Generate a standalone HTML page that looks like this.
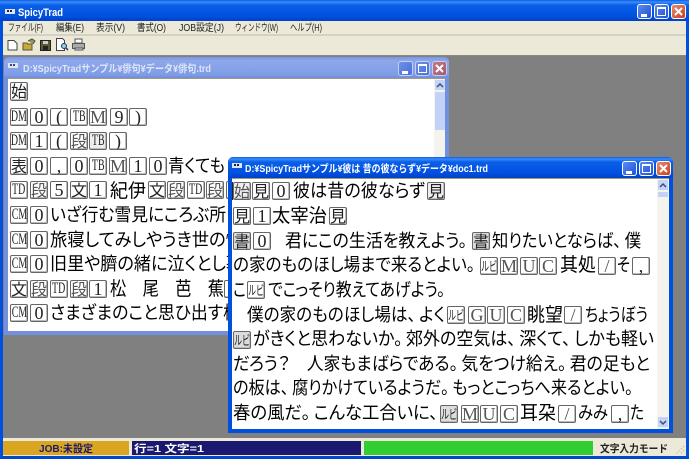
<!DOCTYPE html>
<html><head><meta charset="utf-8"><style>
html,body{margin:0;padding:0}
body{width:689px;height:459px;position:relative;overflow:hidden;background:#808080;font-family:"Liberation Sans","Noto Sans CJK JP",sans-serif}
div,svg{position:absolute}
b{position:absolute;box-sizing:border-box;width:18px;height:18px;border:1px solid #666;border-radius:2px;background:#fff;box-shadow:inset -1px -1px 0 #bbb;font:400 18px/16px "Liberation Serif","Noto Sans CJK JP",serif;text-align:center;color:#222;overflow:hidden;white-space:nowrap}
b i{display:inline-block;font-style:normal;transform:scaleX(.62);margin:0 -8px}
b.g{background:#ddd;color:#222}
b.l{color:#555}
b.n{font-size:16px}
b.k{font-family:"Noto Sans CJK JP",sans-serif;font-size:16px;line-height:15px}
b.r{font:400 13px/15px "Noto Sans CJK JP",sans-serif}
text{font-family:"Liberation Sans","Noto Sans CJK JP",sans-serif;fill:#000;font-size:18px;font-feature-settings:"palt"}
text.j{font-size:19px}
text.t{font-size:10.500px;font-weight:700;fill:#fff;font-feature-settings:normal}
text.m{font-size:10px;fill:#222;font-feature-settings:normal}
.btn{width:15px;height:15px;box-sizing:border-box;border:1px solid #fff;border-radius:3px;background:linear-gradient(135deg,#5c8bf0,#1f50d8)}
.btn.c{background:linear-gradient(135deg,#ec8a6e,#c4421c)}
.in .btn{background:linear-gradient(135deg,#6f90e8,#4a6fd8);border-color:#c3d0f2}
.in .btn.c{background:linear-gradient(135deg,#c07c88,#a85668);border-color:#c3d0f2}
.btn i{position:absolute;display:block;box-sizing:border-box;transform:none;margin:0}
</style></head><body>

<!-- main frame -->
<div style="left:0;top:0;width:689px;height:21px;background:linear-gradient(#0a5ae6 0,#3a8cf8 2px,#0a5fe8 5px,#0050e0 16px,#0040c8 21px)"></div>
<div style="left:0;top:21px;width:3px;height:438px;background:#0050e0"></div>
<div style="left:686px;top:21px;width:3px;height:438px;background:#0050e0"></div>
<div style="left:0;top:456px;width:689px;height:3px;background:#0048d0"></div>
<div style="left:3px;top:21px;width:683px;height:35px;background:#ece9d8"></div>
<div style="left:3px;top:34px;width:683px;height:2px;background:#d4d2c6"></div>
<div style="left:3px;top:55px;width:683px;height:1px;background:#8a887e"></div>

<svg style="left:0;top:0" width="689" height="56">
<rect x="5" y="9" width="10" height="5" fill="#dfe6f6"/><rect x="7" y="10" width="2" height="2" fill="#224"/><rect x="10" y="10" width="2" height="2" fill="#224"/>
<text x="18" y="16" textLength="45" lengthAdjust="spacingAndGlyphs" class="t" style="font-size:11px">SpicyTrad</text>
<text x="8" y="31" textLength="35" lengthAdjust="spacingAndGlyphs" class="m">ファイル(F)</text>
<text x="56" y="31" textLength="28" lengthAdjust="spacingAndGlyphs" class="m">編集(E)</text>
<text x="96" y="31" textLength="29" lengthAdjust="spacingAndGlyphs" class="m">表示(V)</text>
<text x="137" y="31" textLength="29" lengthAdjust="spacingAndGlyphs" class="m">書式(O)</text>
<text x="179" y="31" textLength="45" lengthAdjust="spacingAndGlyphs" class="m">JOB設定(J)</text>
<text x="235" y="31" textLength="43" lengthAdjust="spacingAndGlyphs" class="m">ウィンドウ(W)</text>
<text x="290" y="31" textLength="32" lengthAdjust="spacingAndGlyphs" class="m">ヘルプ(H)</text>
<!-- toolbar -->
<path d="M8 40.500h6l3 3v6.500H8z" fill="#fff" stroke="#444"/>
<path d="M23 50v-7h4l1 1h4v6z" fill="#c9a83a" stroke="#554"/><path d="M28 41l4-2 3 2-2 3" fill="#8ba04a" stroke="#554"/>
<rect x="40.500" y="40.500" width="10" height="10" fill="#5a5a30" stroke="#222"/><rect x="43" y="41" width="5" height="3" fill="#ccc"/><rect x="43" y="46" width="5" height="4" fill="#222"/>
<path d="M56.500 38.500h6l2 2v10h-8z" fill="#fff" stroke="#444"/><circle cx="64" cy="46" r="2.500" fill="#8fd0e0" stroke="#236"/><path d="M66 48l2 2" stroke="#236" stroke-width="1.500"/>
<path d="M75 39h7v4h-7z" fill="#fff" stroke="#555"/><path d="M72.500 43.500h12v5h-12z" fill="#aaa" stroke="#555"/><path d="M75 48h8v2h-8z" fill="#ddd" stroke="#555"/>
</svg>
<div class="btn" style="left:637px;top:4px"><i style="left:3px;top:9px;width:6px;height:3px;background:#fff"></i></div>
<div class="btn" style="left:654px;top:4px"><i style="left:2px;top:2px;width:9px;height:9px;border:1px solid #fff;border-top-width:2px"></i></div>
<div class="btn c" style="left:671px;top:4px"><svg width="13" height="13"><path d="M3 3l7 7M10 3l-7 7" stroke="#fff" stroke-width="2"/></svg></div>

<!-- window 1 -->
<div class="in" style="left:4px;top:57px;width:445px;height:278px;background:#7390e0;border-radius:5px 5px 0 0">
  <div style="left:0;top:0;width:445px;height:21px;border-radius:5px 5px 0 0;background:linear-gradient(#7a96e4,#8ea8ea 4px,#7f9ce6 18px,#6f8cdc)"></div>
  <div class="btn" style="left:394px;top:4px"><i style="left:3px;top:9px;width:6px;height:3px;background:#fff"></i></div>
  <div class="btn" style="left:411px;top:4px"><i style="left:2px;top:2px;width:9px;height:9px;border:1px solid #fff;border-top-width:2px"></i></div>
  <div class="btn c" style="left:428px;top:4px"><svg width="13" height="13"><path d="M3 3l7 7M10 3l-7 7" stroke="#fff" stroke-width="2"/></svg></div>
</div>
<div style="left:8px;top:78px;width:437px;height:253px;background:#fff"></div>
<div style="left:8px;top:78px;width:437px;height:1px;background:#a09a80"></div>
<div style="left:434px;top:79px;width:11px;height:252px;background:#f4f3ee"></div>
<div style="left:435px;top:80px;width:10px;height:10px;background:#c5d4f6"></div>
<div style="left:435px;top:92px;width:10px;height:38px;background:#c3d3f8"></div>
<svg style="left:0;top:0" width="689" height="459">
<path d="M437 87l3-3 3 3" fill="none" stroke="#3a4d80" stroke-width="1.500"/>
<rect x="8" y="63" width="10" height="5" fill="#dfe6f6"/><rect x="10" y="64" width="2" height="2" fill="#446"/><rect x="13" y="64" width="2" height="2" fill="#446"/>
<text x="23" y="72" textLength="188" lengthAdjust="spacingAndGlyphs" class="t" style="fill:#dfe6f8">D:¥SpicyTradサンプル¥俳句¥データ¥俳句.trd</text>
<text x="168" y="172" textLength="57" lengthAdjust="spacingAndGlyphs">青くても</text>
<text x="110" y="197" textLength="36" lengthAdjust="spacingAndGlyphs" class="j">紀伊</text>
<text x="50" y="221" textLength="176" lengthAdjust="spacingAndGlyphs">いざ行む雪見にころぶ所</text>
<text x="50" y="246" textLength="193" lengthAdjust="spacingAndGlyphs">旅寝してみしやうき世の情</text>
<text x="50" y="270" textLength="193" lengthAdjust="spacingAndGlyphs">旧里や臍の緒に泣くとし暮</text>
<text x="110" y="295" textLength="114" lengthAdjust="spacingAndGlyphs" class="j">松　尾　芭　蕉</text>
<text x="50" y="319" textLength="190" lengthAdjust="spacingAndGlyphs">さまざまのこと思ひ出す桜</text>
</svg>
<div>
<b class="k" style="left:10px;top:82px;height:19px">始</b>
<b class="n" style="left:10px;top:108px"><i>DM</i></b><b style="left:30px;top:108px">0</b><b style="left:50px;top:108px">(</b><b class="n" style="left:70px;top:108px"><i>TB</i></b><b class="l" style="left:89px;top:108px">M</b><b style="left:110px;top:108px">9</b><b style="left:129px;top:108px">)</b>
<b class="n" style="left:10px;top:132px"><i>DM</i></b><b style="left:30px;top:132px">1</b><b style="left:50px;top:132px">(</b><b class="k l" style="left:70px;top:132px">段</b><b class="n" style="left:89px;top:132px;background:#eee"><i>TB</i></b><b style="left:109px;top:132px">)</b>
<b class="k" style="left:10px;top:157px">表</b><b style="left:30px;top:157px">0</b><b style="left:50px;top:157px">,</b><b style="left:70px;top:157px">0</b><b class="n" style="left:89px;top:157px"><i>TB</i></b><b class="l" style="left:109px;top:157px">M</b><b style="left:129px;top:157px">1</b><b style="left:149px;top:157px">0</b>
<b class="n" style="left:10px;top:181px"><i>TD</i></b><b class="k l" style="left:30px;top:181px">段</b><b style="left:50px;top:181px">5</b><b class="k" style="left:70px;top:181px">文</b><b style="left:89px;top:181px">1</b><b class="k" style="left:148px;top:181px">文</b><b class="k l" style="left:167px;top:181px">段</b><b class="n" style="left:187px;top:181px"><i>TD</i></b><b class="k l" style="left:206px;top:181px">段</b><b style="left:226px;top:181px"></b>
<b class="n" style="left:10px;top:206px"><i>CM</i></b><b style="left:30px;top:206px">0</b>
<b class="n" style="left:10px;top:231px"><i>CM</i></b><b style="left:30px;top:231px">0</b>
<b class="n" style="left:10px;top:255px"><i>CM</i></b><b style="left:30px;top:255px">0</b>
<b class="k" style="left:10px;top:280px">文</b><b class="k l" style="left:30px;top:280px">段</b><b class="n" style="left:50px;top:280px"><i>TD</i></b><b class="k l" style="left:70px;top:280px">段</b><b style="left:89px;top:280px">1</b><b style="left:224px;top:280px"></b>
<b class="n" style="left:10px;top:304px"><i>CM</i></b><b style="left:30px;top:304px">0</b>
</div>

<!-- window 2 -->
<div style="left:228px;top:157px;width:445px;height:276px;background:#0050e0;border-radius:5px 5px 0 0">
  <div style="left:0;top:0;width:445px;height:21px;border-radius:5px 5px 0 0;background:linear-gradient(#0a5ae6 0,#3a8cf8 2px,#0a5fe8 5px,#0050e0 16px,#0040c8 21px)"></div>
  <div class="btn" style="left:394px;top:4px"><i style="left:3px;top:9px;width:6px;height:3px;background:#fff"></i></div>
  <div class="btn" style="left:411px;top:4px"><i style="left:2px;top:2px;width:9px;height:9px;border:1px solid #fff;border-top-width:2px"></i></div>
  <div class="btn c" style="left:428px;top:4px"><svg width="13" height="13"><path d="M3 3l7 7M10 3l-7 7" stroke="#fff" stroke-width="2"/></svg></div>
</div>
<div style="left:232px;top:178px;width:437px;height:251px;background:#fff"></div>
<div style="left:232px;top:178px;width:437px;height:1px;background:#a09a80"></div>
<div style="left:657px;top:179px;width:12px;height:250px;background:#f4f3ee"></div>
<div style="left:658px;top:180px;width:10px;height:10px;background:#c5d4f6"></div>
<div style="left:658px;top:192px;width:10px;height:5px;background:#c3d3f8"></div>
<div style="left:658px;top:417px;width:10px;height:10px;background:#c5d4f6"></div>
<svg style="left:0;top:0" width="689" height="459">
<path d="M660 187l3-3 3 3" fill="none" stroke="#3a4d80" stroke-width="1.500"/>
<path d="M660 421l3 3 3-3" fill="none" stroke="#3a4d80" stroke-width="1.500"/>
<rect x="232" y="163" width="10" height="5" fill="#dfe6f6"/><rect x="234" y="164" width="2" height="2" fill="#224"/><rect x="237" y="164" width="2" height="2" fill="#224"/>
<text x="245" y="172" textLength="243" lengthAdjust="spacingAndGlyphs" class="t">D:¥SpicyTradサンプル¥彼は 昔の彼ならず¥データ¥doc1.trd</text>
<text x="293" y="197" textLength="132" lengthAdjust="spacingAndGlyphs">彼は昔の彼ならず</text>
<text x="272" y="222" textLength="55" lengthAdjust="spacingAndGlyphs" class="j">太宰治</text>
<text x="285" y="247" textLength="182" lengthAdjust="spacingAndGlyphs">君にこの生活を教えよう。</text>
<text x="492" y="247" textLength="149" lengthAdjust="spacingAndGlyphs">知りたいとならば、&#8201;僕</text>
<text x="233" y="271" textLength="242" lengthAdjust="spacingAndGlyphs">の家のものほし場まで来るとよい。</text>
<text x="560" y="271" textLength="36" lengthAdjust="spacingAndGlyphs" class="j">其処</text>
<text x="617" y="271" textLength="13" lengthAdjust="spacingAndGlyphs">そ</text>
<text x="233" y="296" textLength="13" lengthAdjust="spacingAndGlyphs">こ</text>
<text x="268" y="296" textLength="177" lengthAdjust="spacingAndGlyphs">でこっそり教えてあげよう。</text>
<text x="247" y="321" textLength="198" lengthAdjust="spacingAndGlyphs">僕の家のものほし場は、&#8201;よく</text>
<text x="527" y="321" textLength="36" lengthAdjust="spacingAndGlyphs" class="j">眺望</text>
<text x="585" y="321" textLength="63" lengthAdjust="spacingAndGlyphs">ちょうぼう</text>
<text x="253" y="345" textLength="401" lengthAdjust="spacingAndGlyphs">がきくと思わないか。&#8201;郊外の空気は、&#8201;深くて、&#8201;しかも軽い</text>
<text x="233" y="370" textLength="417" lengthAdjust="spacingAndGlyphs">だろう？　人家もまばらである。&#8201;気をつけ給え。&#8201;君の足もと</text>
<text x="233" y="394" textLength="400" lengthAdjust="spacingAndGlyphs">の板は、&#8201;腐りかけているようだ。&#8201;もっとこっちへ来るとよい。</text>
<text x="233" y="419" textLength="205" lengthAdjust="spacingAndGlyphs">春の風だ。&#8201;こんな工合いに、</text>
<text x="520" y="419" textLength="36" lengthAdjust="spacingAndGlyphs" class="j">耳朶</text>
<text x="578" y="419" textLength="30" lengthAdjust="spacingAndGlyphs">みみ</text>
<text x="630" y="419" textLength="14" lengthAdjust="spacingAndGlyphs">た</text>
</svg>
<div>
<b class="k l" style="left:233px;top:182px;background:#eee">始</b><b class="k" style="left:252px;top:182px">見</b><b style="left:272px;top:182px">0</b><b class="k" style="left:427px;top:182px;background:#eee">見</b>
<b class="k" style="left:233px;top:207px">見</b><b style="left:253px;top:207px">1</b><b class="k" style="left:329px;top:207px">見</b>
<b class="k g" style="left:233px;top:232px">書</b><b style="left:253px;top:232px">0</b><b class="k g" style="left:472px;top:232px">書</b>
<b class="r" style="left:480px;top:257px"><i>ルビ</i></b><b class="l" style="left:500px;top:257px">M</b><b class="l" style="left:520px;top:257px">U</b><b class="l" style="left:539px;top:257px">C</b><b class="l" style="left:598px;top:257px">/</b><b style="left:632px;top:257px">,</b>
<b class="r" style="left:247px;top:281px"><i>ルビ</i></b>
<b class="r" style="left:447px;top:306px"><i>ルビ</i></b><b class="l" style="left:468px;top:306px">G</b><b class="l" style="left:487px;top:306px">U</b><b class="l" style="left:507px;top:306px">C</b><b class="l" style="left:564px;top:306px">/</b>
<b class="r g" style="left:233px;top:331px"><i>ルビ</i></b>
<b class="r g" style="left:440px;top:405px"><i>ルビ</i></b><b class="l" style="left:461px;top:405px">M</b><b class="l" style="left:480px;top:405px">U</b><b class="l" style="left:500px;top:405px">C</b><b class="l" style="left:558px;top:405px">/</b><b style="left:611px;top:405px">,</b>
</div>
<div style="left:232px;top:182px;width:1px;height:18px;background:#222"></div>

<!-- status bar -->
<div style="left:3px;top:438px;width:683px;height:18px;background:#ece9d8"></div>
<div style="left:3px;top:441px;width:126px;height:14px;background:#daa520"></div>
<div style="left:132px;top:441px;width:229px;height:14px;background:#191970"></div>
<div style="left:364px;top:441px;width:229px;height:14px;background:#32cd32"></div>
<svg style="left:0;top:0" width="689" height="459">
<text x="39" y="452" textLength="54" lengthAdjust="spacingAndGlyphs" class="t" style="fill:#191970">JOB:未設定</text>
<text x="134" y="452" textLength="70" lengthAdjust="spacingAndGlyphs" class="t">行=1  文字=1</text>
<text x="600" y="452" textLength="68" lengthAdjust="spacingAndGlyphs" class="t" style="fill:#222">文字入力モード</text>
<path d="M684 446l-8 8M684 450l-4 4" stroke="#bdb9a4" stroke-dasharray="1.500 1.500" fill="none"/>
</svg>
</body></html>
